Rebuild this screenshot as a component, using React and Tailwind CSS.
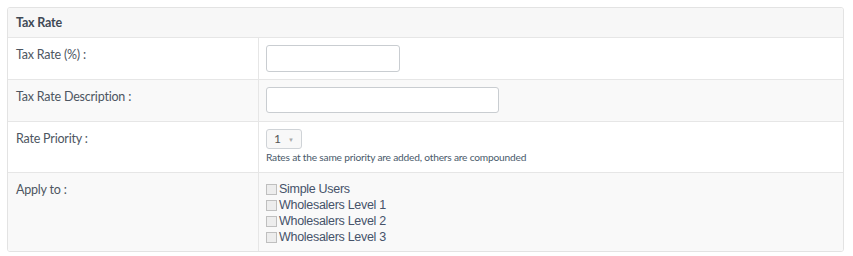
const groups = ["Simple Users", "Wholesalers Level 1", "Wholesalers Level 2", "Wholesalers Level 3"];

const Row = ({ label, children, className }) => (
    <div className={`flex border-t border-[#e6e6e6] ${className}`}>
        <div className="w-[251px] shrink-0 border-r border-[#e6e6e6] pl-[8px] pt-[9px] text-[12.5px] leading-[16px] tracking-[-0.2px] text-[#4d5661]">
            {label}
        </div>
        <div className="flex-1 pl-[7px]">{children}</div>
    </div>
);

export default function App() {
    return (
        <div className="h-[256px] w-[853px] bg-white px-[7px] pt-[7px] font-['Lato',sans-serif]">
            <div className="w-[837px] overflow-hidden rounded-[3px] border border-[#e3e3e3]">
                <div className="h-[29px] bg-[#f7f7f7] pl-[8px] pt-[7px] text-[12.5px] font-bold leading-[15px] tracking-[-0.2px] text-[#3f4955]">
                    Tax Rate
                </div>
                <Row label="Tax Rate (%) :" className="h-[42px] bg-white">
                    <input type="text" className="mt-[7px] h-[27px] w-[134px] rounded-[3px] border border-[#c9cdd1] bg-white" />
                </Row>
                <Row label="Tax Rate Description :" className="h-[42px] bg-[#f9f9f9]">
                    <input type="text" className="mt-[7px] h-[26px] w-[233px] rounded-[3px] border border-[#c9cdd1] bg-white" />
                </Row>
                <Row label="Rate Priority :" className="h-[51px] bg-white">
                    <div className="mt-[7px] flex h-[20px] w-[36px] items-center gap-[7px] rounded-[3px] border border-[#cfd3d7] bg-[#f8f8f8] pl-[7px] text-[12px] text-[#555]">
                        <span>1</span>
                        <span className="text-[6px] text-[#aaa]">▼</span>
                    </div>
                    <p className="mt-[2px] text-[10.2px] leading-[12px] tracking-[-0.2px] text-[#4a5a6b]">
                        Rates at the same priority are added, others are compounded
                    </p>
                </Row>
                <Row label="Apply to :" className="h-[79px] bg-[#f9f9f9]">
                    <div className="pt-[8px]">
                        {groups.map((g) => (
                            <label key={g} className="flex h-[16px] items-center gap-[2px] font-['Liberation_Sans',sans-serif] text-[12.5px] leading-[16px] tracking-[-0.3px] text-[#46536a]">
                                <span className="inline-block h-[11px] w-[11px] border border-[#bfbfbf] bg-[#ededed]" />
                                {g}
                            </label>
                        ))}
                    </div>
                </Row>
            </div>
        </div>
    );
}
